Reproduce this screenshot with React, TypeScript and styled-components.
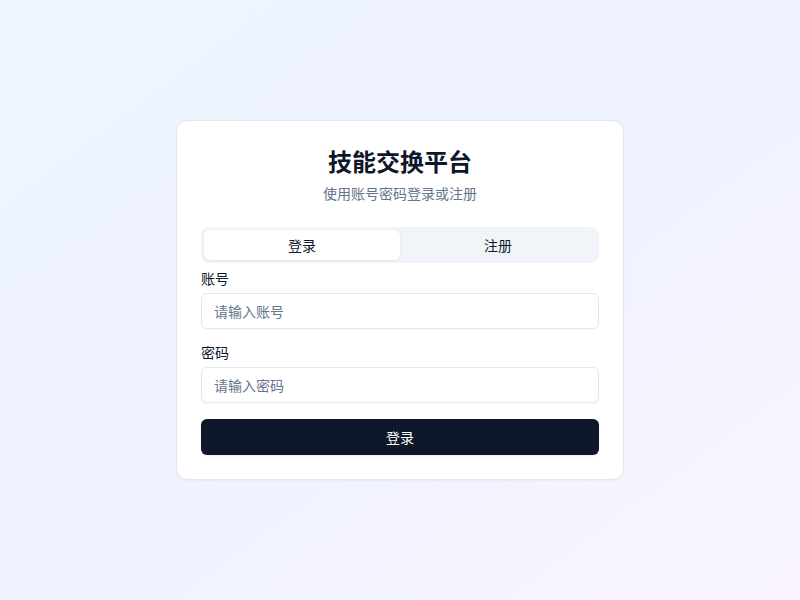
import React, { useState } from "react";
import styled, { createGlobalStyle } from "styled-components";

const GlobalStyle = createGlobalStyle`
  * { box-sizing: border-box; }
  html, body { margin: 0; padding: 0; }
  body {
    font-family: Inter, "Noto Sans CJK SC", "Noto Sans", sans-serif;
    color: #0f172a;
    -webkit-font-smoothing: antialiased;
  }
`;

const Page = styled.div`
  min-height: 100vh;
  display: flex;
  align-items: center;
  justify-content: center;
  padding: 16px;
  background: linear-gradient(to bottom right, #eff6ff, #eef2ff, #faf5ff);
`;

const Card = styled.div`
  width: 100%;
  max-width: 448px;
  background: #ffffff;
  border: 1px solid #e2e8f0;
  border-radius: 12px;
  box-shadow: 0 1px 2px rgba(0, 0, 0, 0.04);
`;

const Header = styled.div`
  display: flex;
  flex-direction: column;
  align-items: center;
  gap: 5px;
  padding: 24px 24px 23px;
  text-align: center;
`;

const Title = styled.h1`
  margin: 0;
  padding-top: 2px;
  font-size: 24px;
  line-height: 32px;
  font-weight: 700;
  color: #0f172a;
`;

const Subtitle = styled.p`
  margin: 0;
  font-size: 14px;
  line-height: 20px;
  color: #64748b;
`;

const Content = styled.div`
  padding: 0 24px 24px;
`;

const TabList = styled.div`
  display: grid;
  grid-template-columns: 1fr 1fr;
  height: 36px;
  padding: 3px;
  background: #f1f5f9;
  border-radius: 8px;
`;

const Tab = styled.button<{ $active: boolean }>`
  border: none;
  border-radius: 6px;
  font-family: inherit;
  font-size: 14px;
  font-weight: 400;
  color: #0f172a;
  background: ${(p) => (p.$active ? "#ffffff" : "transparent")};
  box-shadow: ${(p) => (p.$active ? "0 1px 3px rgba(0,0,0,0.08)" : "none")};
  cursor: pointer;
  padding: 0;
`;

const Form = styled.form`
  margin-top: 8px;
  display: flex;
  flex-direction: column;
  gap: 16px;
`;

const Field = styled.div`
  display: flex;
  flex-direction: column;
  gap: 7px;
`;

const Label = styled.label`
  padding-top: 1px;
  font-size: 14px;
  line-height: 14px;
  font-weight: 400;
  color: #0f172a;
`;

const Input = styled.input`
  height: 36px;
  width: 100%;
  padding: 0 12px;
  border: 1px solid #e2e8f0;
  border-radius: 6px;
  background: #ffffff;
  font-family: inherit;
  font-size: 14px;
  color: #0f172a;
  outline: none;
  box-shadow: 0 1px 2px rgba(0, 0, 0, 0.03);
  &::placeholder {
    color: #64748b;
  }
`;

const Submit = styled.button`
  height: 36px;
  width: 100%;
  border: none;
  border-radius: 6px;
  background: #0f172a;
  color: #ffffff;
  font-family: inherit;
  font-size: 14px;
  font-weight: 400;
  cursor: pointer;
  box-shadow: 0 1px 2px rgba(0, 0, 0, 0.08);
`;

export default function App() {
  const [tab, setTab] = useState<"login" | "register">("login");
  return (
    <>
      <GlobalStyle />
      <Page>
        <Card>
          <Header>
            <Title>技能交换平台</Title>
            <Subtitle>使用账号密码登录或注册</Subtitle>
          </Header>
          <Content>
            <TabList>
              <Tab $active={tab === "login"} onClick={() => setTab("login")}>
                登录
              </Tab>
              <Tab $active={tab === "register"} onClick={() => setTab("register")}>
                注册
              </Tab>
            </TabList>
            <Form onSubmit={(e) => e.preventDefault()}>
              <Field>
                <Label htmlFor="account">账号</Label>
                <Input id="account" placeholder="请输入账号" />
              </Field>
              <Field>
                <Label htmlFor="password">密码</Label>
                <Input id="password" type="password" placeholder="请输入密码" />
              </Field>
              <Submit type="submit">登录</Submit>
            </Form>
          </Content>
        </Card>
      </Page>
    </>
  );
}
